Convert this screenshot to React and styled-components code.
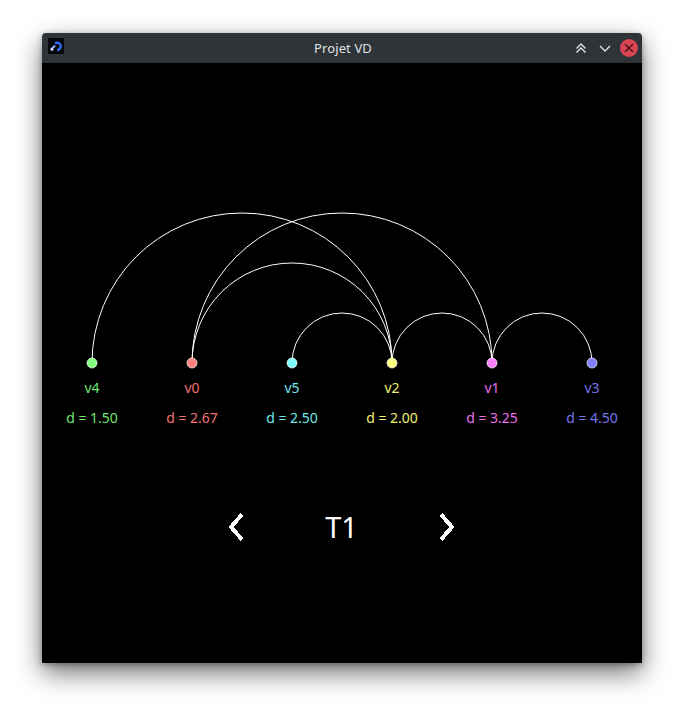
import React from 'react';
import styled, { createGlobalStyle } from 'styled-components';

const GlobalStyle = createGlobalStyle`
  html, body {
    margin: 0;
    padding: 0;
    background: #ffffff;
  }
  body {
    font-family: "Noto Sans", "Open Sans", sans-serif;
  }
`;

const Page = styled.div`
  width: 684px;
  height: 713px;
  padding: 33px 0 0 42px;
  box-sizing: border-box;
  overflow: hidden;
`;

const Window = styled.div`
  width: 600px;
  border-radius: 4px 4px 0 0;
  overflow: hidden;
  box-shadow: 0 10px 26px rgba(0, 0, 0, 0.55), 0 2px 6px rgba(0, 0, 0, 0.3);
`;

const TitleBar = styled.div`
  height: 30px;
  background: #2f3438;
  display: grid;
  grid-template-columns: 1fr auto 1fr;
  align-items: center;
  padding: 0 4px 0 6px;
`;

const Title = styled.div`
  color: #dfe2e5;
  font-size: 13px;
  letter-spacing: 0.1px;
`;

const Buttons = styled.div`
  display: flex;
  justify-content: flex-end;
  align-items: center;
  gap: 6px;
`;

const TitleButton = styled.div`
  width: 18px;
  height: 18px;
  display: flex;
  align-items: center;
  justify-content: center;
  border-radius: 50%;
  background: ${(p) => (p.$close ? '#da4453' : 'transparent')};
`;

const Content = styled.div`
  height: 600px;
  background: #000000;
  display: flex;
  flex-direction: column;
`;

const Chart = styled.svg`
  display: block;
  width: 600px;
  height: 308px;
`;

const LabelRow = styled.div`
  display: grid;
  grid-template-columns: repeat(6, 100px);
  margin-top: ${(p) => p.$top}px;
`;

const Label = styled.div`
  text-align: center;
  font-size: 14px;
  line-height: 20px;
  color: ${(p) => p.$color};
`;

const Nav = styled.div`
  margin-top: 79px;
  display: flex;
  justify-content: center;
  align-items: center;
  padding-right: 1px;
`;

const Arrow = styled.svg`
  display: block;
  width: 16px;
  height: 30px;
`;

const Step = styled.div`
  width: 195px;
  text-align: center;
  color: #ffffff;
  font-size: 29px;
  line-height: 40px;
`;

const nodes = [
  { name: 'v4', d: '1.50', fill: '#80ff80', text: '#6fe46f' },
  { name: 'v0', d: '2.67', fill: '#ff8080', text: '#f07070' },
  { name: 'v5', d: '2.50', fill: '#80ffff', text: '#70e6e6' },
  { name: 'v2', d: '2.00', fill: '#ffff80', text: '#f0f070' },
  { name: 'v1', d: '3.25', fill: '#ff80ff', text: '#e870e8' },
  { name: 'v3', d: '4.50', fill: '#8080ff', text: '#7474ec' },
];

// index pairs into nodes, drawn as arcs above the line
const edges = [
  [0, 3],
  [1, 4],
  [1, 3],
  [2, 3],
  [3, 4],
  [4, 5],
];

const cx = (i) => 50 + i * 100;
const baseY = 300;

function AppIcon() {
  return (
    <svg width="16" height="16" viewBox="0 0 16 16">
      <rect width="16" height="16" fill="#05070c" />
      <path d="M7 5.5 A3.6 3.6 0 1 1 9 12" fill="none" stroke="#2f6df0" strokeWidth="2.4" />
      <path d="M3.5 11 L6.5 8.2" stroke="#8fb3ff" strokeWidth="2.2" strokeLinecap="round" />
      <circle cx="4" cy="11.5" r="1.4" fill="#c8d8ff" />
    </svg>
  );
}

export default function App() {
  return (
    <Page>
      <GlobalStyle />
      <Window>
        <TitleBar>
          <div>
            <AppIcon />
          </div>
          <Title>Projet VD</Title>
          <Buttons>
            <TitleButton>
              <svg width="14" height="14" viewBox="0 0 14 14">
                <path d="M2.5 7.5 L7 3 L11.5 7.5 M2.5 11.5 L7 7 L11.5 11.5" fill="none" stroke="#e3e5e7" strokeWidth="1.3" />
              </svg>
            </TitleButton>
            <TitleButton>
              <svg width="14" height="14" viewBox="0 0 14 14">
                <path d="M2 5 L7 10 L12 5" fill="none" stroke="#e3e5e7" strokeWidth="1.3" />
              </svg>
            </TitleButton>
            <TitleButton $close>
              <svg width="10" height="10" viewBox="0 0 10 10">
                <path d="M1 1 L9 9 M9 1 L1 9" stroke="#3a1418" strokeWidth="1.3" />
              </svg>
            </TitleButton>
          </Buttons>
        </TitleBar>
        <Content>
          <Chart viewBox="0 0 600 308">
            {edges.map(([a, b]) => {
              const r = (cx(b) - cx(a)) / 2;
              return (
                <path
                  key={`${a}-${b}`}
                  d={`M ${cx(a)} ${baseY} A ${r} ${r} 0 0 1 ${cx(b)} ${baseY}`}
                  fill="none"
                  stroke="#ffffff"
                  strokeWidth="1"
                />
              );
            })}
            {nodes.map((n, i) => (
              <circle
                key={n.name}
                cx={cx(i)}
                cy={baseY}
                r="5"
                fill={n.fill}
                stroke="rgba(255,255,255,0.7)"
                strokeWidth="1"
              />
            ))}
          </Chart>
          <LabelRow $top={7}>
            {nodes.map((n) => (
              <Label key={n.name} $color={n.text}>
                {n.name}
              </Label>
            ))}
          </LabelRow>
          <LabelRow $top={10}>
            {nodes.map((n) => (
              <Label key={n.name} $color={n.text}>
                d = {n.d}
              </Label>
            ))}
          </LabelRow>
          <Nav>
            <Arrow viewBox="0 0 16 30" shapeRendering="crispEdges">
              <polyline points="14,2.5 3,15 14,27.5" fill="none" stroke="#ffffff" strokeWidth="4" />
            </Arrow>
            <Step>T1</Step>
            <Arrow viewBox="0 0 16 30" shapeRendering="crispEdges">
              <polyline points="2,2.5 13,15 2,27.5" fill="none" stroke="#ffffff" strokeWidth="4" />
            </Arrow>
          </Nav>
        </Content>
      </Window>
    </Page>
  );
}
